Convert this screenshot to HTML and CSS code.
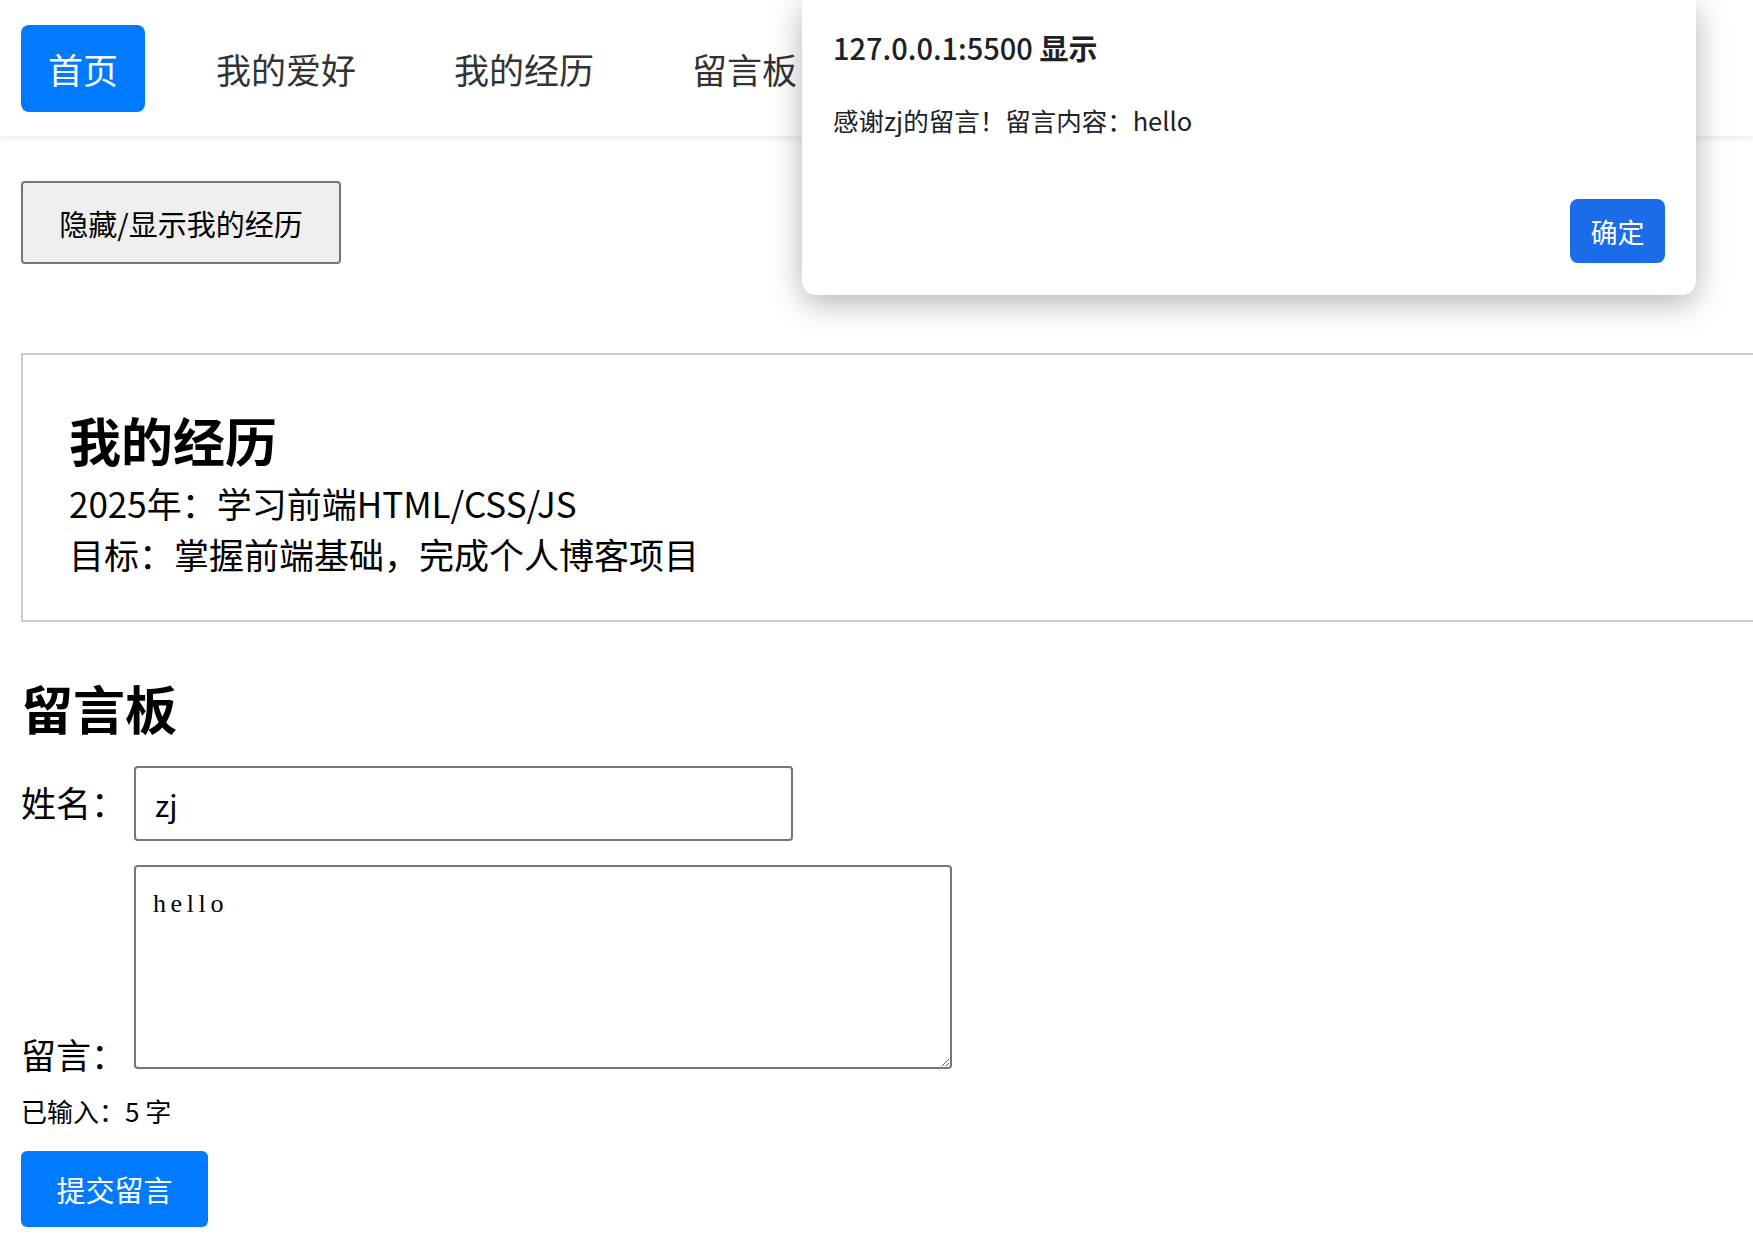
FILE: index.html
```html
<!DOCTYPE html>
<html lang="zh-CN">
<head>
<meta charset="utf-8">
<title>个人博客</title>
<link rel="stylesheet" href="styles.css">
</head>
<body>
<div class="page">
  <nav class="nav">
    <a class="nav-item active">首页</a>
    <a class="nav-item">我的爱好</a>
    <a class="nav-item">我的经历</a>
    <a class="nav-item">留言板</a>
  </nav>

  <main class="main">
    <button class="toggle-btn">隐藏/显示我的经历</button>

    <section class="exp-box">
      <h2 class="exp-title">我的经历</h2>
      <p class="exp-line">2025年：学习前端HTML/CSS/JS</p>
      <p class="exp-line">目标：掌握前端基础，完成个人博客项目</p>
    </section>

    <h2 class="board-title">留言板</h2>
    <div class="field field-name"><label class="field-label">姓名：</label><input class="name-input" type="text" value="zj"></div>
    <div class="field field-msg"><label class="field-label">留言：</label><textarea class="msg-input">hello</textarea></div>
    <div class="count">已输入：5 字</div>
    <button class="submit-btn">提交留言</button>
  </main>

  <div class="dialog">
    <div class="dialog-title"><span class="dialog-origin">127.0.0.1:5500</span> <b class="dialog-show">显示</b></div>
    <div class="dialog-msg">感谢zj的留言！留言内容：hello</div>
    <div class="dialog-actions"><button class="dialog-btn">确定</button></div>
  </div>
</div>
</body>
</html>
```

FILE: styles.css
```css
html, body {
  margin: 0;
  padding: 0;
  background: #fff;
}

body {
  font-family: "Noto Sans CJK SC", "Noto Sans", sans-serif;
  color: #000;
}

.page {
  position: relative;
  width: 1753px;
  min-height: 1245px;
  overflow: hidden;
}

/* ---------- nav ---------- */
.nav {
  height: 136px;
  display: flex;
  align-items: center;
  gap: 44px;
  padding-left: 21px;
  background: #fff;
  box-shadow: 0 3px 6px rgba(0, 0, 0, 0.08);
}

.nav-item {
  display: block;
  height: 87px;
  line-height: 87px;
  padding: 0 27px;
  font-size: 35px;
  color: #333;
  border-radius: 8px;
  text-decoration: none;
}

.nav-item.active {
  background: #007bff;
  color: #fff;
}

/* ---------- main ---------- */
.main {
  padding: 0 21px;
}

.toggle-btn {
  display: block;
  margin-top: 45px;
  width: 320px;
  height: 83px;
  padding: 0;
  background: #efefef;
  border: 2px solid #767676;
  border-radius: 4px;
  font-family: "Noto Sans CJK SC", sans-serif;
  font-size: 29px;
  color: #000;
}

.exp-box {
  margin-top: 89px;
  margin-right: -300px;
  border: 2px solid #ccc;
  padding: 51px 46px 41px;
}

.exp-title {
  margin: 0 0 3px;
  font-size: 52px;
  line-height: 68px;
  font-weight: 700;
}

.exp-line {
  margin: 0;
  font-size: 35px;
  line-height: 51px;
}

.board-title {
  margin: 52px 0 24px;
  font-size: 52px;
  line-height: 68px;
  font-weight: 700;
}

.field {
  font-size: 35px;
  line-height: 42px;
}

.field-name {
  margin-bottom: 24px;
}

.field-label {
  margin-right: 8px;
}

.name-input {
  box-sizing: border-box;
  width: 659px;
  height: 75px;
  padding: 0 19px;
  border: 2px solid #767676;
  border-radius: 4px;
  font-family: "Noto Sans CJK SC", sans-serif;
  font-size: 30px;
  color: #000;
}

.msg-input {
  box-sizing: border-box;
  width: 818px;
  height: 204px;
  padding: 22px 17px 14px;
  border: 2px solid #767676;
  border-radius: 4px;
  font-family: "Liberation Serif", serif;
  font-size: 26px;
  letter-spacing: 4.6px;
  color: #000;
}

.count {
  margin-top: 18px;
  font-size: 26px;
  line-height: 36px;
}

.submit-btn {
  display: block;
  margin-top: 22px;
  width: 187px;
  height: 76px;
  padding: 0;
  background: #007bff;
  color: #fff;
  border: none;
  border-radius: 6px;
  font-family: "Noto Sans CJK SC", sans-serif;
  font-size: 29px;
}

/* ---------- alert dialog ---------- */
.dialog {
  position: absolute;
  top: 0;
  left: 802px;
  width: 894px;
  height: 295px;
  box-sizing: border-box;
  padding: 27px 31px 32px;
  background: #fff;
  border-radius: 0 0 14px 14px;
  box-shadow: 0 8px 32px rgba(0, 0, 0, 0.3);
  display: flex;
  flex-direction: column;
}

.dialog-title {
  font-size: 29px;
  line-height: 40px;
  color: #202124;
}

.dialog-origin {
  font-weight: 500;
}

.dialog-show {
  font-weight: 700;
}

.dialog-msg {
  margin-top: 35px;
  font-size: 25.5px;
  line-height: 36px;
  color: #202124;
}

.dialog-actions {
  margin-top: auto;
  display: flex;
  justify-content: flex-end;
}

.dialog-btn {
  width: 95px;
  height: 64px;
  padding: 0;
  border: none;
  border-radius: 8px;
  background: #1b6ce8;
  color: #fff;
  font-family: "Noto Sans CJK SC", sans-serif;
  font-size: 27px;
}
```
